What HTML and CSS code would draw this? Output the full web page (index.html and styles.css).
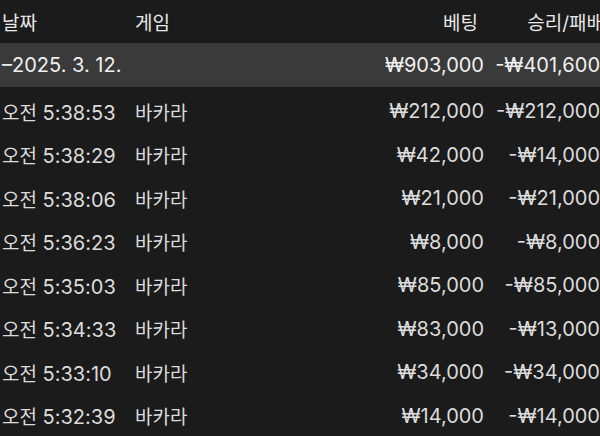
FILE: index.html
```html
<!DOCTYPE html>
<html lang="ko">
<head>
<meta charset="utf-8">
<link rel="stylesheet" href="styles.css">
</head>
<body>
<div class="table">
  <div class="row head">
    <div class="c date ko">날짜</div>
    <div class="c game ko">게임</div>
    <div class="c num bet ko">베팅</div>
    <div class="c num win ko">승리/패배</div>
  </div>
  <div class="row group">
    <div class="c date">–2025. 3. 12.</div>
    <div class="c game"></div>
    <div class="c num">₩903,000</div>
    <div class="c num">-₩401,600</div>
  </div>
  <div class="row"><div class="c date"><span class="ko">오전</span> 5:38:53</div><div class="c game ko">바카라</div><div class="c num">₩212,000</div><div class="c num">-₩212,000</div></div>
  <div class="row"><div class="c date"><span class="ko">오전</span> 5:38:29</div><div class="c game ko">바카라</div><div class="c num">₩42,000</div><div class="c num">-₩14,000</div></div>
  <div class="row"><div class="c date"><span class="ko">오전</span> 5:38:06</div><div class="c game ko">바카라</div><div class="c num">₩21,000</div><div class="c num">-₩21,000</div></div>
  <div class="row"><div class="c date"><span class="ko">오전</span> 5:36:23</div><div class="c game ko">바카라</div><div class="c num">₩8,000</div><div class="c num">-₩8,000</div></div>
  <div class="row"><div class="c date"><span class="ko">오전</span> 5:35:03</div><div class="c game ko">바카라</div><div class="c num">₩85,000</div><div class="c num">-₩85,000</div></div>
  <div class="row"><div class="c date"><span class="ko">오전</span> 5:34:33</div><div class="c game ko">바카라</div><div class="c num">₩83,000</div><div class="c num">-₩13,000</div></div>
  <div class="row"><div class="c date"><span class="ko">오전</span> 5:33:10</div><div class="c game ko">바카라</div><div class="c num">₩34,000</div><div class="c num">-₩34,000</div></div>
  <div class="row"><div class="c date"><span class="ko">오전</span> 5:32:39</div><div class="c game ko">바카라</div><div class="c num">₩14,000</div><div class="c num">-₩14,000</div></div>
</div>
</body>
</html>
```
FILE: styles.css
```css
html, body {
  margin: 0;
  padding: 0;
  background: #1b1b1b;
  overflow: hidden;
}
body {
  width: 600px;
  height: 436px;
  font-family: "Inter", "Noto Sans CJK KR", sans-serif;
  font-size: 20px;
  color: #dcdcdc;
}
.table {
  display: flex;
  flex-direction: column;
}
.row {
  display: grid;
  grid-template-columns: 133px 1fr 120px 116px;
  align-items: center;
  height: 43.5px;
  padding-left: 2px;
  white-space: nowrap;
}
.ko {
  font-size: 19px;
}
.head {
  height: 42px;
  padding-bottom: 1px;
  color: #e8e8e8;
}
.group {
  background: #3a3a3a;
  color: #f0f0f0;
  margin-bottom: 3px;
}
.num {
  text-align: right;
}
.head .bet {
  padding-right: 6px;
}
.head .win {
  margin-right: -4px;
}
```
